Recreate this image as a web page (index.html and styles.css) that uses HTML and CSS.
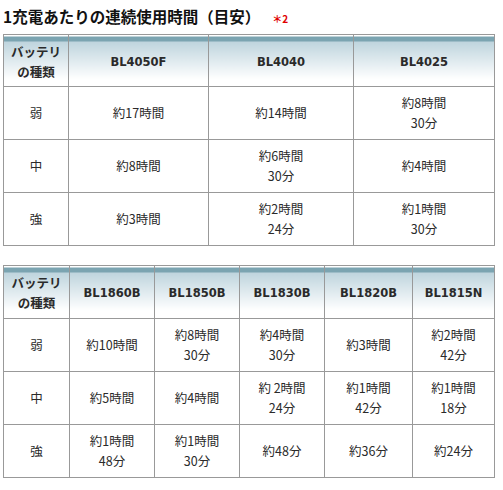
FILE: index.html
```html
<!DOCTYPE html>
<html lang="ja">
<head>
<meta charset="utf-8">
<link rel="stylesheet" href="styles.css">
</head>
<body>
<div class="page">
  <h2 class="title">1充電あたりの連続使用時間（目安）<span class="note">＊2</span></h2>

  <table class="spec t1">
    <colgroup><col class="c-type"><col style="width:140px"><col style="width:145px"><col style="width:141px"></colgroup>
    <thead>
      <tr><th class="jp">バッテリ<br>の種類</th><th>BL4050F</th><th>BL4040</th><th>BL4025</th></tr>
    </thead>
    <tbody>
      <tr><td>弱</td><td>約17時間</td><td>約14時間</td><td>約8時間<br>30分</td></tr>
      <tr><td>中</td><td>約8時間</td><td>約6時間<br>30分</td><td>約4時間</td></tr>
      <tr><td>強</td><td>約3時間</td><td>約2時間<br>24分</td><td>約1時間<br>30分</td></tr>
    </tbody>
  </table>

  <table class="spec t2">
    <colgroup><col style="width:66px"><col style="width:85px"><col style="width:85px"><col style="width:85px"><col style="width:88px"><col style="width:82px"></colgroup>
    <thead>
      <tr><th class="jp">バッテリ<br>の種類</th><th>BL1860B</th><th>BL1850B</th><th>BL1830B</th><th>BL1820B</th><th>BL1815N</th></tr>
    </thead>
    <tbody>
      <tr><td>弱</td><td>約10時間</td><td>約8時間<br>30分</td><td>約4時間<br>30分</td><td>約3時間</td><td>約2時間<br>42分</td></tr>
      <tr><td>中</td><td>約5時間</td><td>約4時間</td><td>約 2時間<br>24分</td><td>約1時間<br>42分</td><td>約1時間<br>18分</td></tr>
      <tr><td>強</td><td>約1時間<br>48分</td><td>約1時間<br>30分</td><td>約48分</td><td>約36分</td><td>約24分</td></tr>
    </tbody>
  </table>
</div>
</body>
</html>
```
FILE: styles.css
```css
html, body {
  margin: 0;
  padding: 0;
  background: #fff;
}
.page {
  padding: 0 0 0 3px;
  font-family: "Noto Sans CJK JP", sans-serif;
  color: #333;
}
.title {
  margin: 6px 0 5px 0;
  font-size: 15.5px;
  line-height: 20px;
  font-weight: bold;
  color: #111;
}
.note {
  color: #e00000;
  font-size: 10px;
  margin-left: 12px;
  font-weight: bold;
}
.spec {
  border-collapse: collapse;
  table-layout: fixed;
  width: 492px;
  font-size: 12.5px;
  line-height: 20px;
}
.t2 {
  margin-top: 19px;
}
.c-type {
  width: 65px;
}
.spec th,
.spec td {
  border: 1px solid #999;
  text-align: center;
  vertical-align: middle;
  padding: 6px 0;
}
.spec td {
  color: #2a2a2a;
}
.spec th {
  padding: 7px 0 4px 0;
  font-family: "DejaVu Sans", Verdana, sans-serif;
  font-size: 11.5px;
  font-weight: bold;
  color: #2a2a2a;
  background: linear-gradient(to bottom, #fff 0, #fff 1px, #7ba4b1 1px, #7ba4b1 6px, #bed4dd 6px, #fff 44px);
}
.t2 th {
  padding-bottom: 5px;
}
.spec th.jp {
  font-family: "Noto Sans CJK JP", sans-serif;
  font-size: 12.5px;
}
```
